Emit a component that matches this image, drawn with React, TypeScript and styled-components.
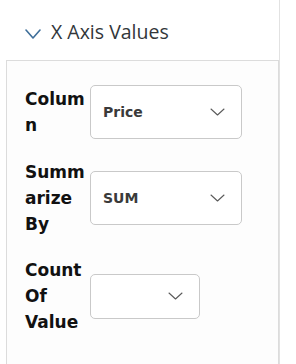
import styled, { createGlobalStyle } from "styled-components";

const GlobalSld = createGlobalStyle`
    html, body {
        margin: 0;
        padding: 0;
        background: #ffffff;
        height: 100%;
        overflow: hidden;
    }
    #root {
        height: 100%;
    }
`;

type Campo = {
    label: string;
    valor: string;
    largura: number;
    altura: number;
};

const campos: Campo[] = [
    { label: "Column", valor: "Price", largura: 152, altura: 54 },
    { label: "Summarize By", valor: "SUM", largura: 152, altura: 54 },
    { label: "Count Of Value", valor: "", largura: 110, altura: 45 },
];

function Chevron({ cor, w, h, espessura }: { cor: string; w: number; h: number; espessura: number }) {
    return (
        <svg width={w} height={h} viewBox={`0 0 ${w} ${h}`} fill="none">
            <polyline
                points={`1,1 ${w / 2},${h - 1} ${w - 1},1`}
                stroke={cor}
                strokeWidth={espessura}
                strokeLinecap="round"
                strokeLinejoin="round"
            />
        </svg>
    );
}

function App() {
    return (
        <PageSld>
            <GlobalSld />
            <ColunaSld>
                <HeaderSld>
                    <IconeTituloSld>
                        <Chevron cor="#3f6f9a" w={16} h={10} espessura={1.6} />
                    </IconeTituloSld>
                    <TituloSld>X Axis Values</TituloSld>
                </HeaderSld>
                <PainelSld>
                    {campos.map((c) => (
                        <LinhaSld key={c.label}>
                            <LabelSld>{c.label}</LabelSld>
                            <SelectSld $largura={c.largura} $altura={c.altura}>
                                <ValorSld>{c.valor}</ValorSld>
                                <Chevron cor="#5a5a5a" w={15} h={8} espessura={1.1} />
                            </SelectSld>
                        </LinhaSld>
                    ))}
                </PainelSld>
            </ColunaSld>
        </PageSld>
    );
}

const PageSld = styled.div`
    display: flex;
    height: 100%;
`;

const ColunaSld = styled.div`
    width: 279px;
    border-right: 1px solid #e2e2e2;
    display: flex;
    flex-direction: column;
`;

const HeaderSld = styled.div`
    display: flex;
    align-items: center;
    gap: 10px;
    padding: 20px 0 0 25px;
    height: 24px;
    margin-bottom: 16px;
`;

const IconeTituloSld = styled.div`
    display: flex;
    margin-top: 4px;
`;

const TituloSld = styled.div`
    font-family: "Open Sans", "Liberation Sans", sans-serif;
    font-size: 19.5px;
    line-height: 24px;
    color: #32363a;
`;

const PainelSld = styled.div`
    margin-left: 6px;
    width: 253px;
    flex: 1;
    border: 1px solid #dcdcdc;
    border-bottom: none;
    background: #fdfdfd;
    padding: 24px 0 0 18px;
    display: flex;
    flex-direction: column;
    gap: 20px;
`;

const LinhaSld = styled.div`
    display: flex;
    align-items: center;
    gap: 3px;
`;

const LabelSld = styled.div`
    width: 62px;
    font-family: "DejaVu Sans", sans-serif;
    font-weight: bold;
    font-size: 17px;
    line-height: 26px;
    color: #111111;
    overflow-wrap: anywhere;
`;

const SelectSld = styled.div<{ $largura: number; $altura: number }>`
    box-sizing: border-box;
    width: ${(props) => props.$largura}px;
    height: ${(props) => props.$altura}px;
    border: 1px solid #c9c9c9;
    border-radius: 5px;
    background: #ffffff;
    display: flex;
    align-items: center;
    justify-content: space-between;
    padding: 0 16px 0 12px;
`;

const ValorSld = styled.div`
    font-family: "DejaVu Sans", sans-serif;
    font-weight: bold;
    font-size: 14px;
    color: #3a3a3a;
`;

export default App;
